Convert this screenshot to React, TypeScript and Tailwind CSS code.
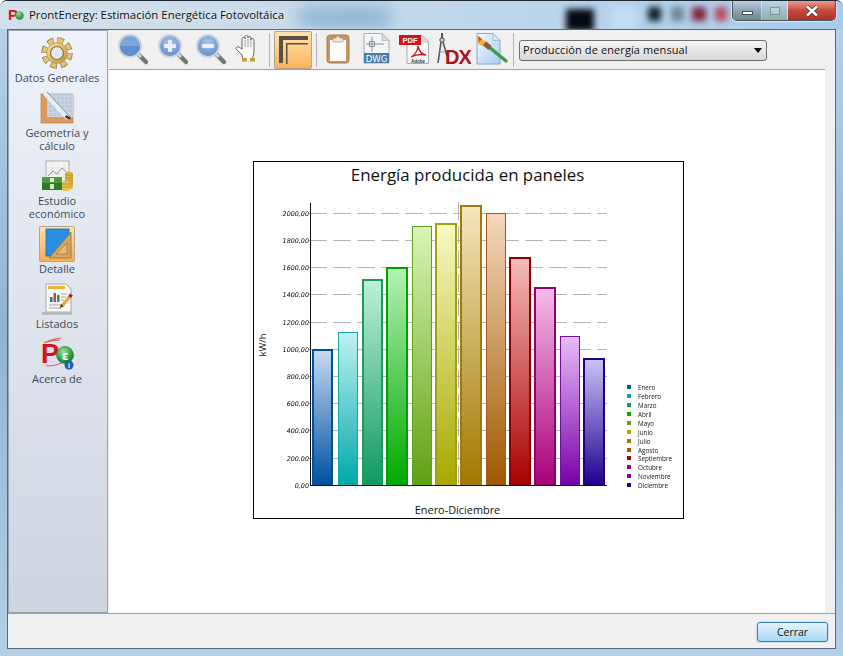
import React from 'react';

const UI_FONT = "font-['Open_Sans','Noto_Sans',sans-serif]";

const BARS = [
  { x0: 312, x1: 333, top: 349, bw: 2, light: '#c6daf3', dark: '#0050a0', line: '#00509a' },
  { x0: 338, x1: 358, top: 332, bw: 1, light: '#c0f2f2', dark: '#00a8a8', line: '#10a8a8' },
  { x0: 362, x1: 383, top: 279, bw: 2, light: '#bdf2d6', dark: '#109860', line: '#209860' },
  { x0: 386, x1: 408, top: 267, bw: 2, light: '#b4f2b4', dark: '#00a800', line: '#00a000' },
  { x0: 412, x1: 432, top: 226, bw: 1, light: '#daf5b6', dark: '#60a010', line: '#60a020' },
  { x0: 435, x1: 457, top: 223, bw: 2, light: '#f9f9c4', dark: '#a8a800', line: '#a0a010' },
  { x0: 460, x1: 482, top: 205, bw: 2, light: '#f6e6bb', dark: '#a07800', line: '#a07810' },
  { x0: 486, x1: 506, top: 213, bw: 1, light: '#f6d7be', dark: '#a05800', line: '#a05a10' },
  { x0: 509, x1: 531, top: 257, bw: 2, light: '#f6bcbc', dark: '#a80000', line: '#900000' },
  { x0: 534, x1: 556, top: 287, bw: 2, light: '#f6bcea', dark: '#a80078', line: '#900070' },
  { x0: 560, x1: 580, top: 336, bw: 1, light: '#e9bcf9', dark: '#7800a8', line: '#7010a0' },
  { x0: 583, x1: 605, top: 358, bw: 2, light: '#cac2f6', dark: '#200090', line: '#200080' },
];

const AXIS = [
  { label: '2000,00', y: 213 },
  { label: '1800,00', y: 240 },
  { label: '1600,00', y: 267 },
  { label: '1400,00', y: 294 },
  { label: '1200,00', y: 322 },
  { label: '1000,00', y: 349 },
  { label: '800,00', y: 376 },
  { label: '600,00', y: 403 },
  { label: '400,00', y: 430 },
  { label: '200,00', y: 458 },
  { label: '0,00', y: 485 },
];

const LEGEND = [
  { label: 'Enero', y: 387 },
  { label: 'Febrero', y: 396 },
  { label: 'Marzo', y: 405 },
  { label: 'Abril', y: 414 },
  { label: 'Mayo', y: 423 },
  { label: 'Junio', y: 432 },
  { label: 'Julio', y: 441 },
  { label: 'Agosto', y: 450 },
  { label: 'Septiembre', y: 458 },
  { label: 'Octubre', y: 467 },
  { label: 'Noviembre', y: 476 },
  { label: 'Diciembre', y: 485 },
];

const Chart: React.FC = () => (
  <div className="w-[431px] h-[358px] border border-black bg-white">
    <svg width="429" height="356" viewBox="254 162 429 356" fontFamily="'Open Sans','Noto Sans',sans-serif">
      <defs>
        {BARS.map((b, i) => (
          <linearGradient key={i} id={`bar${i}`} x1="0" y1="0" x2="0" y2="1">
            <stop offset="0" stopColor={b.light} />
            <stop offset="1" stopColor={b.dark} />
          </linearGradient>
        ))}
      </defs>
      <text x="467.5" y="181" textAnchor="middle" fontSize="16.9" fill="#111">Energía producida en paneles</text>

      {AXIS.slice(0, 10).map((a) => (
        <line key={a.y} x1="309" x2="607" y1={a.y + 0.5} y2={a.y + 0.5} stroke="#b4b4b4" strokeDasharray="18 6" />
      ))}
      <line x1="458.5" x2="458.5" y1="202" y2="485" stroke="#b4b4b4" strokeDasharray="18 6" />

      {BARS.map((b, i) => (
        <rect
          key={i}
          x={b.x0 + b.bw / 2}
          y={b.top + b.bw / 2}
          width={b.x1 - b.x0 - b.bw}
          height={485 - b.top - b.bw / 2}
          fill={`url(#bar${i})`}
          stroke={b.line}
          strokeWidth={b.bw}
        />
      ))}

      <line x1="310.5" x2="310.5" y1="203" y2="486" stroke="#111" />
      <line x1="310" x2="607" y1="485.5" y2="485.5" stroke="#111" />

      <g opacity="0.99">
        {AXIS.map((a) => (
          <text key={a.y} x="309" y={a.y + 2.5} textAnchor="end" fontSize="6.4" fontStyle="italic" fontFamily="'DejaVu Sans',sans-serif" fill="#000">
            {a.label}
          </text>
        ))}
      </g>

      <text transform="translate(266 345) rotate(-90)" textAnchor="middle" fontSize="9.5" fill="#111">kW/h</text>
      <text x="457.5" y="514" textAnchor="middle" fontSize="10.9" fill="#111">Enero-Diciembre</text>

      <g opacity="0.99">
        {LEGEND.map((l, i) => (
          <g key={l.label}>
            <rect x="627" y={l.y - 2} width="4" height="4" fill={BARS[i].dark} />
            <text x="638" y={l.y + 2.5} fontSize="6.3" fill="#111">{l.label}</text>
          </g>
        ))}
      </g>
    </svg>
  </div>
);

const Magnifier: React.FC<{ id: string; box: string; cx: number; kind: 'fit' | 'plus' | 'minus' }> = ({ id, box, cx, kind }) => (
  <svg width="38" height="38" viewBox={box}>
    <defs>
      <radialGradient id={id} cx="0.5" cy="0.35" r="0.8">
        <stop offset="0" stopColor="#a9c6ec" />
        <stop offset="1" stopColor="#4f7fc0" />
      </radialGradient>
    </defs>
    <line x1={cx + 9} y1="55" x2={cx + 16} y2="62" stroke="#6f7a72" strokeWidth="4.5" strokeLinecap="round" />
    <line x1={cx + 8} y1="54" x2={cx + 11} y2="57" stroke="#d0d4d0" strokeWidth="3" />
    <circle cx={cx} cy="46" r="11" fill={`url(#${id})`} stroke="#c9d3dc" strokeWidth="2" />
    {kind === 'fit' && <path d={`M${cx - 10} 46 h20 a10 10 0 0 1 -20 0z`} fill="#5f8fd0" />}
    {kind === 'fit' && <path d={`M${cx - 10} 46 a10 10 0 0 1 20 0z`} fill="#7ea6dc" />}
    {kind !== 'fit' && <rect x={cx - 6} y="44" width="12" height="4" rx="1" fill="#e8f0fa" />}
    {kind === 'plus' && <rect x={cx - 2} y="40" width="4" height="12" rx="1" fill="#e8f0fa" />}
  </svg>
);

const HandTool: React.FC = () => (
  <svg width="38" height="38" viewBox="228 31 38 38">
    <path
      d="M243 60 l-1-5 -5-5 c-2-2 0-4 2-3 l3 2 v-10 c0-2 3-2 3 0 v-2 c0-2 3-2 3 0 v1 c0-2 3-2 3 0 v2 c0-2 3-2 3 0 v10 c0 4-1 6-2 10z"
      fill="#fbfbfb"
      stroke="#555"
      strokeWidth="0.9"
    />
    <path d="M245 40 v7 M248 39 v8 M251 40 v7" stroke="#777" strokeWidth="0.7" />
    <rect x="242" y="58" width="13" height="3.5" fill="#c99a3c" />
    <rect x="247" y="58" width="3" height="3.5" fill="#fff" />
  </svg>
);

const LayersTool: React.FC = () => (
  <div className="w-[38px] h-[38px] rounded-[2px] border border-[#b5a48a] bg-gradient-to-b from-[#fee2ae] to-[#fab45c] flex items-center justify-center">
    <svg width="36" height="36" viewBox="275 32 36 36">
      <path d="M279 36 h29 v4 h-25 v23 h-4z" fill="#5a5142" />
      <path d="M286 43 h22 v1.5 h-20.5 v19.5 h-1.500z" fill="#5a5142" />
    </svg>
  </div>
);

const ClipboardTool: React.FC = () => (
  <svg width="38" height="38" viewBox="319 31 38 38">
    <rect x="327" y="35" width="22" height="28" rx="3" fill="#c49663" stroke="#a97c4c" />
    <rect x="330" y="40" width="16" height="21" fill="#fffefb" />
    <path d="M333 38 h3 a2 2 0 0 1 4 0 h3 v4 h-10z" fill="#efe9dc" stroke="#9a8a70" strokeWidth="0.6" />
  </svg>
);

const DwgTool: React.FC = () => (
  <svg width="38" height="38" viewBox="357 31 38 38">
    <path d="M364 33.500 h18 l7 7 v22.500 h-25z" fill="#f3f5f7" stroke="#a8b0b8" />
    <path d="M382 33.500 v7 h7z" fill="#d5dbe0" stroke="#a8b0b8" strokeWidth="0.7" />
    <path d="M372 37 v15 M366 44 h18" stroke="#6d7c88" strokeWidth="0.8" fill="none" />
    <rect x="369.500" y="41.500" width="5" height="5" fill="none" stroke="#6d7c88" strokeWidth="0.8" />
    <rect x="364" y="53" width="25" height="10" fill="#4b7ba8" />
    <text x="376.500" y="61.500" textAnchor="middle" fontSize="8.500" fontFamily="'DejaVu Sans',sans-serif" fill="#fff">DWG</text>
  </svg>
);

const PdfTool: React.FC = () => (
  <svg width="38" height="38" viewBox="395 31 38 38">
    <path d="M407 35.500 h15 l6.500 6.500 v21.500 h-21.500z" fill="#fbfbfb" stroke="#a9a9a9" />
    <path d="M422 35.500 v6.500 h6.500z" fill="#ddd" stroke="#a9a9a9" strokeWidth="0.6" />
    <rect x="399" y="35" width="22" height="10" fill="#d3131a" />
    <text x="410" y="43" textAnchor="middle" fontSize="7.500" fontWeight="700" fontFamily="'Liberation Sans',sans-serif" fill="#fff">PDF</text>
    <path d="M411 57 c4-2 7-7 7-11 c1 5 3 8 8 9 c-5-1-11 0-15 2z" fill="none" stroke="#c9161c" strokeWidth="1.300" />
    <text x="418" y="62.500" textAnchor="middle" fontSize="4.500" fontWeight="700" fontFamily="'Liberation Sans',sans-serif" fill="#333">Adobe</text>
  </svg>
);

const DxTool: React.FC = () => (
  <svg width="38" height="38" viewBox="433 31 38 38">
    <circle cx="442" cy="40" r="2.200" fill="#cfd3d6" stroke="#444" strokeWidth="1" />
    <path d="M442 33 v5" stroke="#333" strokeWidth="1.600" />
    <path d="M441 42 l-3 21 M443 42 l4 14" stroke="#556" strokeWidth="1.600" fill="none" />
    <path d="M439 52 h7" stroke="#889" strokeWidth="0.8" />
    <text x="458" y="63.500" textAnchor="middle" fontSize="20" fontWeight="700" fontFamily="'Liberation Sans',sans-serif" letterSpacing="-1" fill="#a5161c">DX</text>
  </svg>
);

const BrushTool: React.FC = () => (
  <svg width="38" height="38" viewBox="471 31 38 38">
    <defs>
      <linearGradient id="pageBlue" x1="0" y1="0" x2="1" y2="1">
        <stop offset="0" stopColor="#f2f8fe" />
        <stop offset="1" stopColor="#a9cdf0" />
      </linearGradient>
    </defs>
    <path d="M477 33.500 h16 l7 7 v23.500 h-23z" fill="url(#pageBlue)" stroke="#86a9cc" />
    <path d="M493 33.500 v7 h7z" fill="#d6e7f8" stroke="#86a9cc" strokeWidth="0.6" />
    <line x1="489" y1="47" x2="506" y2="61" stroke="#3e9a49" strokeWidth="3.400" strokeLinecap="round" />
    <line x1="484" y1="43" x2="490" y2="48" stroke="#8b5a3a" strokeWidth="5" />
    <path d="M478 36 l8 6 -4 4 -5-3z" fill="#f0b429" />
    <path d="M478 36 l4 3 -3 3z" fill="#d84a2b" />
  </svg>
);

const GearIcon: React.FC = () => (
  <svg width="36" height="36" viewBox="39 35 36 36">
    <defs>
      <linearGradient id="gearFill" x1="0" y1="0" x2="1" y2="1">
        <stop offset="0" stopColor="#f6e3a6" />
        <stop offset="1" stopColor="#bb9440" />
      </linearGradient>
    </defs>
    <circle cx="57" cy="53" r="11.500" fill="none" stroke="#8f7230" strokeWidth="8.500" strokeDasharray="5.600 3.430" />
    <circle cx="57" cy="53" r="11.500" fill="none" stroke="#e2c476" strokeWidth="7" strokeDasharray="4.700 4.330" strokeDashoffset="-0.450" />
    <circle cx="57" cy="53" r="10.500" fill="url(#gearFill)" stroke="#a5853b" strokeWidth="0.6" />
    <circle cx="57" cy="53" r="6.500" fill="#e2e7f0" stroke="#8f7230" strokeWidth="1.200" />
  </svg>
);

const GeometryIcon: React.FC = () => (
  <svg width="36" height="36" viewBox="39 90 36 36">
    <defs>
      <pattern id="geoGrid" width="4" height="4" patternUnits="userSpaceOnUse">
        <rect width="4" height="4" fill="#bccbdc" />
        <path d="M0 0 H4 M0 0 V4" stroke="#dfe7f0" strokeWidth="0.6" />
      </pattern>
    </defs>
    <rect x="41" y="94" width="32" height="29" fill="#dc9a60" stroke="#b97a42" strokeWidth="0.6" />
    <rect x="47" y="94" width="26" height="23" fill="url(#geoGrid)" />
    <line x1="45" y1="93" x2="68" y2="118" stroke="#e9eef4" strokeWidth="5" />
    <line x1="47" y1="92" x2="70" y2="117" stroke="#7d8a95" strokeWidth="1" />
    <path d="M66 115 l5 3 -1 1.500 -5-2z" fill="#333" />
  </svg>
);

const MoneyIcon: React.FC = () => (
  <svg width="36" height="36" viewBox="39 158 36 36">
    <rect x="46" y="161" width="23" height="24" fill="#f4f5f2" stroke="#a9aea9" />
    <path d="M46 168 h23 M46 174 h23 M46 180 h23 M52 161 v24 M58 161 v24 M64 161 v24" stroke="#dde0dc" strokeWidth="0.7" />
    <path d="M48 176 l5-5 4 3 5-6 6 5" fill="none" stroke="#8a9aa4" strokeWidth="1" />
    <rect x="42" y="177" width="20" height="6" fill="#4f9a3c" />
    <rect x="42" y="183" width="20" height="7" fill="#2f7c2a" />
    <rect x="50" y="184" width="4" height="5" fill="#d6ecc8" />
    <rect x="50" y="178" width="4" height="4" fill="#d6ecc8" />
    <rect x="65" y="172" width="8" height="17" rx="2" fill="#d9b23a" />
    <path d="M65 175 h8 M65 178 h8 M65 181 h8 M65 184 h8" stroke="#a8842a" strokeWidth="0.7" />
    <rect x="62" y="181" width="8" height="10" rx="2" fill="#e3c24d" />
    <path d="M62 184 h8 M62 187 h8" stroke="#a8842a" strokeWidth="0.7" />
  </svg>
);

const DetailIcon: React.FC = () => (
  <div className="w-[36px] h-[36px] rounded-[2px] border border-[#b5a48a] bg-gradient-to-b from-[#fee2ae] to-[#f8ae54] flex items-center justify-center">
    <svg width="34" height="34" viewBox="40 227 34 34">
      <rect x="46" y="229" width="23" height="27" fill="#2a8fe2" stroke="#1468b0" strokeWidth="0.8" />
      <path d="M71 232 v26 h-22z" fill="#cfa765" stroke="#8f6c35" strokeWidth="0.8" />
      <path d="M67 243 v11 h-11z" fill="#f5b765" stroke="#8f6c35" strokeWidth="0.6" />
    </svg>
  </div>
);

const ListIcon: React.FC = () => (
  <svg width="36" height="36" viewBox="39 281 36 36">
    <path d="M46 284 h20 l5 5 v23 h-25z" fill="#fbfbf8" stroke="#a6a6a0" />
    <rect x="42" y="312" width="30" height="3" fill="#b9bcbc" />
    <rect x="48" y="286" width="17" height="3" fill="#eeb23c" />
    <rect x="50" y="297" width="2.500" height="5" fill="#3569a8" />
    <rect x="53.500" y="293" width="2.500" height="9" fill="#c8473a" />
    <rect x="57" y="295" width="2.500" height="7" fill="#3a8a4a" />
    <path d="M61 294 h6 M61 297 h5 M61 300 h3 M49 305 h14 M49 308 h12" stroke="#9aa0a4" strokeWidth="1" />
    <line x1="71" y1="295" x2="62" y2="306" stroke="#e7a93a" strokeWidth="3.500" />
    <line x1="71.500" y1="294.500" x2="69.500" y2="297" stroke="#a3252a" strokeWidth="3.500" />
    <path d="M61 304 l2.500 2.200 -3.500 2z" fill="#333" />
  </svg>
);

const AboutIcon: React.FC = () => (
  <svg width="36" height="36" viewBox="39 336 36 36">
    <defs>
      <radialGradient id="greenBall" cx="0.4" cy="0.3" r="0.8">
        <stop offset="0" stopColor="#9fe39a" />
        <stop offset="0.6" stopColor="#21a33c" />
        <stop offset="1" stopColor="#0c6b2a" />
      </radialGradient>
    </defs>
    <path d="M44 343 c5-3 12-4 17-5 M46 342 c5-1 9-2 14-2 M46 366 c5 0 11-1 16-3" stroke="#d9636a" strokeWidth="1.200" fill="none" />
    <text x="41" y="363" fontSize="27" fontWeight="700" fontFamily="'Liberation Sans',sans-serif" fill="#d8121c">P</text>
    <circle cx="65" cy="355" r="8.500" fill="url(#greenBall)" stroke="#555" strokeWidth="0.6" />
    <text x="65" y="360" textAnchor="middle" fontSize="13" fontWeight="700" fontFamily="'DejaVu Sans',sans-serif" fill="#fff">ε</text>
    <circle cx="69" cy="365" r="4.500" fill="#1f5fa8" />
    <text x="69" y="368" textAnchor="middle" fontSize="7" fontWeight="700" fontFamily="'Liberation Sans',sans-serif" fill="#fff">i</text>
  </svg>
);

const TitleIcon: React.FC = () => (
  <svg width="16" height="16" viewBox="0 0 16 16" className="shrink-0">
    <defs>
      <radialGradient id="titleBall" cx="0.4" cy="0.3" r="0.8">
        <stop offset="0" stopColor="#8fe08a" />
        <stop offset="1" stopColor="#0c7a2e" />
      </radialGradient>
    </defs>
    <text x="0" y="13" fontSize="15" fontWeight="700" fontFamily="'Liberation Sans',sans-serif" fill="#d8121c">P</text>
    <circle cx="11.500" cy="8.500" r="4.200" fill="url(#titleBall)" />
  </svg>
);

const SideItem: React.FC<{ icon: React.ReactNode; label: string }> = ({ icon, label }) => (
  <div className="flex flex-col items-center mb-[6px]">
    <div className="h-[36px] w-[36px] flex items-center justify-center">{icon}</div>
    <div className="w-[88px] text-[11px] leading-[13px] text-center text-[#3b4b5c]">{label}</div>
  </div>
);

const Sep: React.FC<{ cls: string }> = ({ cls }) => <div className={`w-px h-[34px] bg-[#b4b4b4] shrink-0 ${cls}`} />;

const WindowButtons: React.FC = () => (
  <div className="relative ml-auto mr-[7px] flex h-[20px] self-start rounded-b-[5px] border border-t-0 border-[#4a5560] overflow-hidden shadow-[0_0_0_1px_rgba(255,255,255,0.5)]">
    <div className="w-[29px] flex items-center justify-center border-r border-[#ffffff80] bg-gradient-to-b from-[#b9cfe0] via-[#8fa4b4] to-[#6f8a84]">
      <div className="w-[11px] h-[4px] mt-[4px] bg-white border border-[#44505a]" />
    </div>
    <div className="w-[26px] flex items-center justify-center border-r border-[#ffffff80] bg-gradient-to-b from-[#bcd5e6] via-[#a3c0cc] to-[#8fb0a2]">
      <div className="w-[10px] h-[8px] border border-[#7f93a0] bg-[#ffffff40]" />
    </div>
    <div className="w-[47px] flex items-center justify-center bg-gradient-to-b from-[#e59b8e] via-[#c9483c] to-[#b03027]">
      <svg width="14" height="12" viewBox="0 0 14 12">
        <path d="M2 1.500 L12 10.500 M12 1.500 L2 10.500" stroke="#4a2a28" strokeWidth="4" />
        <path d="M2 1.500 L12 10.500 M12 1.500 L2 10.500" stroke="#fff" strokeWidth="2.600" />
      </svg>
    </div>
  </div>
);

const App: React.FC = () => {
  return (
    <div className={`relative w-[843px] h-[656px] overflow-hidden flex flex-col rounded-t-[7px] border-t border-[#1d2730] bg-gradient-to-b from-[#b9d3ea] via-[#8fb4d6] to-[#b4cfe6] ${UI_FONT}`}>
      {/* Title bar */}
      <div className="relative h-[28px] shrink-0 flex items-center pl-[8px] overflow-hidden bg-gradient-to-r from-[#d3e0ea] via-[#c2d8ea] to-[#a8cbea]">
        <div className="absolute left-[300px] top-[6px] w-[90px] h-[20px] bg-[#8fb3d4] blur-[8px]" />
        <div className="absolute left-[566px] top-[8px] w-[28px] h-[22px] bg-[#050a12] blur-[3px]" />
        <div className="absolute left-[612px] top-[6px] w-[24px] h-[24px] bg-[#c4def6] blur-[4px]" />
        <div className="absolute left-[648px] top-[6px] w-[13px] h-[14px] bg-[#16222e] blur-[3px]" />
        <div className="absolute left-[671px] top-[6px] w-[13px] h-[14px] bg-[#748696] blur-[3px]" />
        <div className="absolute left-[692px] top-[6px] w-[14px] h-[14px] bg-[#80283a] blur-[3px]" />
        <div className="absolute left-[715px] top-[6px] w-[12px] h-[14px] bg-[#b84c5c] blur-[3px]" />
        <div className="relative flex items-center gap-[5px]">
          <TitleIcon />
          <span className="text-[11.4px] text-[#111] [text-shadow:0_0_6px_#fff]">ProntEnergy: Estimación Energética Fotovoltáica</span>
        </div>
        <WindowButtons />
      </div>

      {/* Client area */}
      <div className="flex-1 ml-[7px] mr-[7px] mb-[7px] border border-[#56687a] bg-[#f0f0f0] flex flex-col min-h-0">
        <div className="h-[584px] shrink-0 flex border-b border-[#a0a0a0]">
          <div className="w-[100px] mr-px shrink-0 pt-[4px] pr-[2px] flex flex-col items-center border border-[#9aa5b0] bg-gradient-to-b from-[#eef2fa] to-[#cfd5df]">
            <SideItem icon={<GearIcon />} label="Datos Generales" />
            <SideItem icon={<GeometryIcon />} label="Geometría y cálculo" />
            <SideItem icon={<MoneyIcon />} label="Estudio económico" />
            <SideItem icon={<DetailIcon />} label="Detalle" />
            <SideItem icon={<ListIcon />} label="Listados" />
            <SideItem icon={<AboutIcon />} label="Acerca de" />
          </div>

          <div className="flex-1 flex flex-col pt-px pr-[10px] min-w-0">
            <div className="h-[39px] shrink-0 border-b border-[#a0a0a0] flex items-center pl-[5px]">
              <Magnifier id="zoomFit" box="114 31 38 38" cx={130} kind="fit" />
              <Magnifier id="zoomIn" box="152 31 38 38" cx={170} kind="plus" />
              <Magnifier id="zoomOut" box="190 31 38 38" cx={208} kind="minus" />
              <HandTool />
              <Sep cls="ml-[3px] mr-[4px]" />
              <LayersTool />
              <Sep cls="ml-[4px] mr-[2px]" />
              <ClipboardTool />
              <DwgTool />
              <PdfTool />
              <DxTool />
              <BrushTool />
              <Sep cls="ml-[4px] mr-[5px]" />
              <div className="w-[248px] h-[21px] rounded-[3px] border border-[#707070] bg-gradient-to-b from-[#f4f4f4] to-[#d8d8d8] flex items-center justify-between pl-[3px] pr-[4px]">
                <span className="text-[11px] text-[#111] tracking-[0.1px]">Producción de energía mensual</span>
                <div className="w-0 h-0 border-x-[4px] border-x-transparent border-t-[5px] border-t-black" />
              </div>
            </div>
            <div className="flex-1 bg-white flex items-center justify-center pl-[3px] pb-[4px] min-h-0">
              <Chart />
            </div>
          </div>
        </div>

        <div className="flex-1 flex items-center justify-end pr-[7px] pt-[2px]">
          <button className="w-[71px] h-[20px] rounded-[3px] border border-[#3c7fb1] bg-gradient-to-b from-[#e6f5fd] via-[#c6e6f9] to-[#a7d9f5] shadow-[0_0_2px_#6fc0ea] text-[10.5px] leading-none text-[#111]">
            Cerrar
          </button>
        </div>
      </div>
    </div>
  );
};

export default App;
